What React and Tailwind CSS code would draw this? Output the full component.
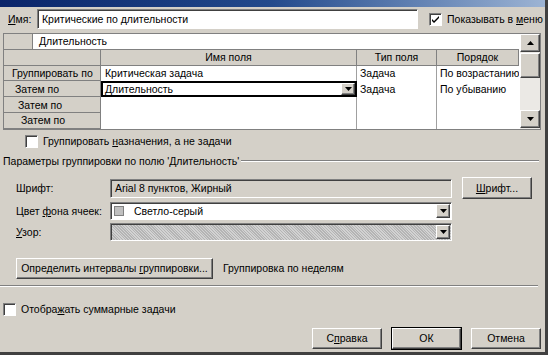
import React from "react";

const sunken =
  "border border-t-[#808080] border-l-[#808080] border-b-white border-r-white shadow-[inset_1px_1px_0_#404040]";
const raised =
  "border border-t-white border-l-white border-b-[#404040] border-r-[#404040] shadow-[inset_-1px_-1px_0_#808080]";

const Arrow = ({ up }) => (
  <svg width="7" height="4" viewBox="0 0 7 4">
    <path d={up ? "M0 4h7L3.5 0z" : "M0 0h7L3.5 4z"} fill="#000" />
  </svg>
);

const DropButton = ({ className = "" }) => (
  <div className={`${raised} bg-[#d4d0c8] flex items-center justify-center shrink-0 ${className}`}>
    <Arrow />
  </div>
);

const CheckBox = ({ checked }) => (
  <div className={`${sunken} w-[13px] h-[13px] bg-white flex items-center justify-center shrink-0`}>
    {checked && (
      <svg width="9" height="9" viewBox="0 0 9 9">
        <path d="M1 4l2 2 5-5v2L3 8 1 6z" fill="#000" />
      </svg>
    )}
  </div>
);

const Button = ({ children, className = "", isDefault }) => (
  <div
    className={`${raised} bg-[#d4d0c8] flex items-center justify-center ${
      isDefault ? "outline outline-1 outline-black" : ""
    } ${className}`}
  >
    {children}
  </div>
);

const rowHeads = [
  { label: "Группировать по", pad: "pl-[8px]" },
  { label: "Затем по", pad: "pl-[11px]" },
  { label: "Затем по", pad: "pl-[14px]" },
  { label: "Затем по", pad: "pl-[17px]" },
];

const rows = [
  { name: "Критическая задача", type: "Задача", order: "По возрастанию" },
  { name: "Длительность", type: "Задача", order: "По убыванию", active: true },
  { name: "", type: "", order: "" },
  { name: "", type: "", order: "" },
];

export default function App() {
  return (
    <div className="w-[548px] h-[355px] bg-[#d4d0c8] text-[10.5px] leading-none whitespace-nowrap text-black font-['Liberation_Sans',Arial,sans-serif] flex flex-col overflow-hidden border-r-[3px] border-b-[3px] border-r-[#404040] border-b-[#404040]">
      {/* Title bar */}
      <div className="h-[7px] shrink-0 bg-gradient-to-r from-[#0a246a] via-[#234a8c] to-[#9db4d4]" />

      {/* Name row */}
      <div className="flex items-center mt-[2px] h-[20px]">
        <span className="w-[37px] pl-[8px]">
          <u>И</u>мя:
        </span>
        <div className={`${sunken} w-[381px] h-[20px] bg-white flex items-center pl-[4px]`}>
          Критические по длительности
        </div>
        <div className="flex items-center ml-[11px] gap-[5px]">
          <CheckBox checked />
          <span>
            Показывать в <u>м</u>еню
          </span>
        </div>
      </div>

      {/* Grid */}
      <div className="flex mt-[4px] ml-[3px] w-[538px] h-[97px] border border-[#808080] bg-white">
        <div className="w-[515px] flex flex-col">
          <div className="flex h-[16px] border-b border-[#808080]">
            <div className="w-[29px] bg-[#d4d0c8] border-r border-[#808080]" />
            <div className="flex-1 flex items-center pl-[6px]">Длительность</div>
          </div>
          <div className="grid grid-cols-[97px_256px_80px_82px] h-[16px] bg-[#d4d0c8]">
            <div className="border-r border-b border-[#808080]" />
            <div className="border-r border-b border-[#808080] flex items-center justify-center">Имя поля</div>
            <div className="border-r border-b border-[#808080] flex items-center justify-center">Тип поля</div>
            <div className="border-r border-b border-[#808080] flex items-center justify-center">Порядок</div>
          </div>
          {rows.map((r, i) => (
            <div key={i} className="grid grid-cols-[97px_256px_80px_82px] h-[16px]">
              <div className={`bg-[#d4d0c8] border-r border-b border-[#808080] flex items-center ${rowHeads[i].pad}`}>
                {rowHeads[i].label}
              </div>
              {r.active ? (
                <div className="border-2 border-black flex items-center">
                  <span className="flex-1 pl-[2px]">{r.name}</span>
                  <DropButton className="w-[14px] h-[12px]" />
                </div>
              ) : (
                <div className="border-r border-[#a0a0a0] flex items-center pl-[4px]">{r.name}</div>
              )}
              <div className="border-r border-[#a0a0a0] flex items-center pl-[3px]">{r.type}</div>
              <div className="flex items-center pl-[3px] overflow-hidden">{r.order}</div>
            </div>
          ))}
        </div>
        {/* Scrollbar */}
        <div className="w-[21px] ml-[1px] flex flex-col bg-[#ebe9e5]">
          <Button className="h-[18px]">
            <Arrow up />
          </Button>
          <div className={`${raised} bg-[#d4d0c8] h-[25px] mt-[1px]`} />
          <div className="flex-1" />
          <Button className="h-[18px] mb-[1px]">
            <Arrow />
          </Button>
        </div>
      </div>

      {/* Assignments checkbox */}
      <div className="flex items-center gap-[5px] ml-[25px] mt-[5px] h-[13px]">
        <CheckBox />
        <span>
          Группировать <u>н</u>азначения, а не задачи
        </span>
      </div>

      {/* Group box title */}
      <div className="flex items-center mt-[7px] ml-[3px] mr-[6px] h-[12px]">
        <span className="pr-[2px]">Параметры группировки по полю 'Длительность'</span>
        <div className="flex-1 border-t border-[#808080] border-b border-b-white" />
      </div>

      {/* Font row */}
      <div className="flex items-center mt-[10px] h-[22px]">
        <span className="w-[110px] pl-[16px]">Шрифт:</span>
        <div className={`${sunken} w-[342px] h-[19px] flex items-center pl-[4px]`}>Arial 8 пунктов, Жирный</div>
        <Button className="w-[70px] h-[22px] ml-[10px]">
          <span>
            <u>Ш</u>рифт...
          </span>
        </Button>
      </div>

      {/* Color row */}
      <div className="flex items-center mt-[3px] h-[18px]">
        <span className="w-[110px] pl-[16px]">
          Цвет <u>ф</u>она ячеек:
        </span>
        <div className={`${sunken} w-[342px] h-[18px] bg-white flex items-center pl-[3px] pr-[1px]`}>
          <div className="w-[10px] h-[10px] border border-[#808080] bg-[#c0c0c0]" />
          <span className="flex-1 pl-[10px]">Светло-серый</span>
          <DropButton className="w-[14px] h-[14px]" />
        </div>
      </div>

      {/* Pattern row */}
      <div className="flex items-center mt-[3px] h-[18px]">
        <span className="w-[110px] pl-[16px]">
          <u>У</u>зор:
        </span>
        <div className={`${sunken} w-[342px] h-[18px] flex items-center pr-[1px] bg-[repeating-linear-gradient(45deg,#b4b4b4_0px,#b4b4b4_1px,#d2d2d2_1px,#d2d2d2_2px)]`}>
          <div className="flex-1" />
          <DropButton className="w-[14px] h-[14px]" />
        </div>
      </div>

      {/* Intervals row */}
      <div className="flex items-center mt-[17px] h-[21px]">
        <Button className="w-[197px] h-[21px] ml-[16px]">
          <span>
            Определить интервалы <u>г</u>руппировки...
          </span>
        </Button>
        <span className="ml-[10px]">Группировка по неделям</span>
      </div>

      <div className="mt-[6px] ml-0 mr-[7px] border-t border-[#808080] border-b border-b-white" />

      {/* Summary tasks */}
      <div className="flex items-center gap-[5px] ml-[3px] mt-[16px] h-[13px]">
        <CheckBox />
        <span>
          Отобра<u>ж</u>ать суммарные задачи
        </span>
      </div>

      {/* Bottom buttons */}
      <div className="flex justify-end gap-[10px] mt-[12px] mr-[4px] h-[21px]">
        <Button className="w-[70px] h-[21px]">
          <span>
            С<u>п</u>равка
          </span>
        </Button>
        <Button className="w-[69px] h-[21px]" isDefault>
          ОК
        </Button>
        <Button className="w-[70px] h-[21px]">Отмена</Button>
      </div>
    </div>
  );
}
